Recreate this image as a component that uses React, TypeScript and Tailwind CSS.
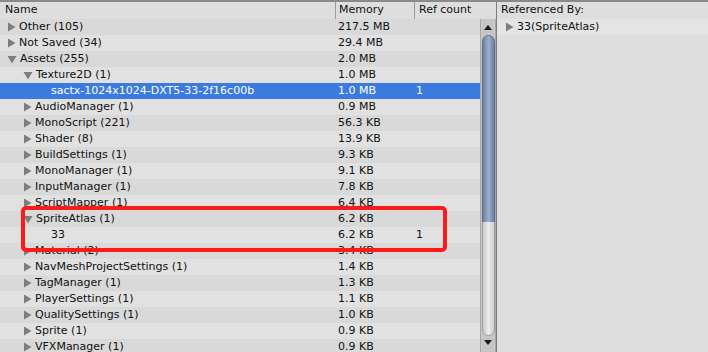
import React from 'react';

type Row = { name: string; depth: number; arrow?: 'right' | 'down'; mem: string; ref?: string; selected?: boolean };

const rows: Row[] = [
  { name: 'Other (105)', depth: 0, arrow: 'right', mem: '217.5 MB' },
  { name: 'Not Saved (34)', depth: 0, arrow: 'right', mem: '29.4 MB' },
  { name: 'Assets (255)', depth: 0, arrow: 'down', mem: '2.0 MB' },
  { name: 'Texture2D (1)', depth: 1, arrow: 'down', mem: '1.0 MB' },
  { name: 'sactx-1024x1024-DXT5-33-2f16c00b', depth: 2, mem: '1.0 MB', ref: '1', selected: true },
  { name: 'AudioManager (1)', depth: 1, arrow: 'right', mem: '0.9 MB' },
  { name: 'MonoScript (221)', depth: 1, arrow: 'right', mem: '56.3 KB' },
  { name: 'Shader (8)', depth: 1, arrow: 'right', mem: '13.9 KB' },
  { name: 'BuildSettings (1)', depth: 1, arrow: 'right', mem: '9.3 KB' },
  { name: 'MonoManager (1)', depth: 1, arrow: 'right', mem: '9.1 KB' },
  { name: 'InputManager (1)', depth: 1, arrow: 'right', mem: '7.8 KB' },
  { name: 'ScriptMapper (1)', depth: 1, arrow: 'right', mem: '6.4 KB' },
  { name: 'SpriteAtlas (1)', depth: 1, arrow: 'down', mem: '6.2 KB' },
  { name: '33', depth: 2, mem: '6.2 KB', ref: '1' },
  { name: 'Material (2)', depth: 1, arrow: 'right', mem: '3.4 KB' },
  { name: 'NavMeshProjectSettings (1)', depth: 1, arrow: 'right', mem: '1.4 KB' },
  { name: 'TagManager (1)', depth: 1, arrow: 'right', mem: '1.3 KB' },
  { name: 'PlayerSettings (1)', depth: 1, arrow: 'right', mem: '1.1 KB' },
  { name: 'QualitySettings (1)', depth: 1, arrow: 'right', mem: '1.0 KB' },
  { name: 'Sprite (1)', depth: 1, arrow: 'right', mem: '0.9 KB' },
  { name: 'VFXManager (1)', depth: 1, arrow: 'right', mem: '0.9 KB' },
];

const indent = ['pl-[7px]', 'pl-[23px]', 'pl-[51px]'];

function Arrow({ dir }: { dir: 'right' | 'down' }) {
  return dir === 'right' ? (
    <svg width="9" height="10" viewBox="0 0 9 10" className="shrink-0">
      <path d="M1 0.5 L8.5 5 L1 9.5 Z" fill="#7d7d7d" />
    </svg>
  ) : (
    <svg width="10" height="9" viewBox="0 0 10 9" className="shrink-0">
      <path d="M0.5 1 L9.5 1 L5 8.5 Z" fill="#7d7d7d" />
    </svg>
  );
}

export default function App() {
  return (
    <div
      className="relative w-[708px] h-[352px] overflow-hidden bg-[#dedede] text-[11px] text-[#111] border-t-2 border-[#8a8a8a]"
      style={{ fontFamily: '"DejaVu Sans", Verdana, sans-serif' }}
    >
      <div className="flex h-full">
        {/* left pane */}
        <div className="w-[496px] flex flex-col">
          <div className="h-[17px] flex items-center shrink-0">
            <div className="w-[335px] pl-[5px]">Name</div>
            <div className="w-[79px] h-full border-l border-[#9a9a9a] pl-[3px] flex items-center">Memory</div>
            <div className="flex-1 h-full border-l border-[#9a9a9a] pl-[4px] flex items-center">Ref count</div>
          </div>
          <div className="flex flex-1 min-h-0">
            <div className="w-[480px] flex flex-col">
              {rows.map((r, i) => (
                <div
                  key={r.name}
                  className={`h-[16px] shrink-0 flex items-center ${
                    r.selected ? 'bg-[#3b7be0] text-white' : i % 2 === 0 ? 'bg-[#d9d9d9]' : 'bg-[#e1e1e1]'
                  }`}
                >
                  <div className={`w-[337px] flex items-center gap-[3px] ${indent[r.depth]}`}>
                    {r.arrow && <Arrow dir={r.arrow} />}
                    <span className="whitespace-nowrap">{r.name}</span>
                  </div>
                  <div className="w-[79px] pl-[1px] whitespace-nowrap">{r.mem}</div>
                  <div className="flex-1">{r.ref}</div>
                </div>
              ))}
            </div>
            {/* scrollbar */}
            <div className="w-[16px] bg-[#c6c6c6] border-x border-[#a8a8a8] flex flex-col items-center">
              <div className="h-[16px] flex items-center justify-center shrink-0">
                <svg width="8" height="5" viewBox="0 0 8 5">
                  <path d="M0 5 L4 0 L8 5 Z" fill="#1a1a1a" />
                </svg>
              </div>
              <div className="w-[13px] h-[197px] rounded-full border border-[#5a6d8c] bg-gradient-to-r from-[#6c81a3] via-[#9cafcc] to-[#6c81a3] shrink-0" />
              <div className="w-[13px] flex-1 -mt-[10px] rounded-b-full border border-t-0 border-[#a0a0a0] bg-gradient-to-r from-[#c8c8c8] via-[#ececec] to-[#cfcfcf] mb-[4px]" />
              <div className="h-[12px] flex items-start justify-center shrink-0">
                <svg width="8" height="5" viewBox="0 0 8 5">
                  <path d="M0 0 L8 0 L4 5 Z" fill="#1a1a1a" />
                </svg>
              </div>
            </div>
          </div>
        </div>
        {/* right pane */}
        <div className="flex-1 border-l border-[#7e7e7e] flex flex-col">
          <div className="h-[17px] flex items-center pl-[4px] shrink-0">Referenced By:</div>
          <div className="h-[16px] flex items-center gap-[3px] pl-[8px] bg-[#e4e4e4]">
            <Arrow dir="right" />
            <span>33(SpriteAtlas)</span>
          </div>
        </div>
      </div>
      {/* highlight box */}
      <div className="absolute left-[21px] top-[204px] w-[426px] h-[46px] border-[4px] border-[#ff1a1a] rounded-[5px]" />
    </div>
  );
}
